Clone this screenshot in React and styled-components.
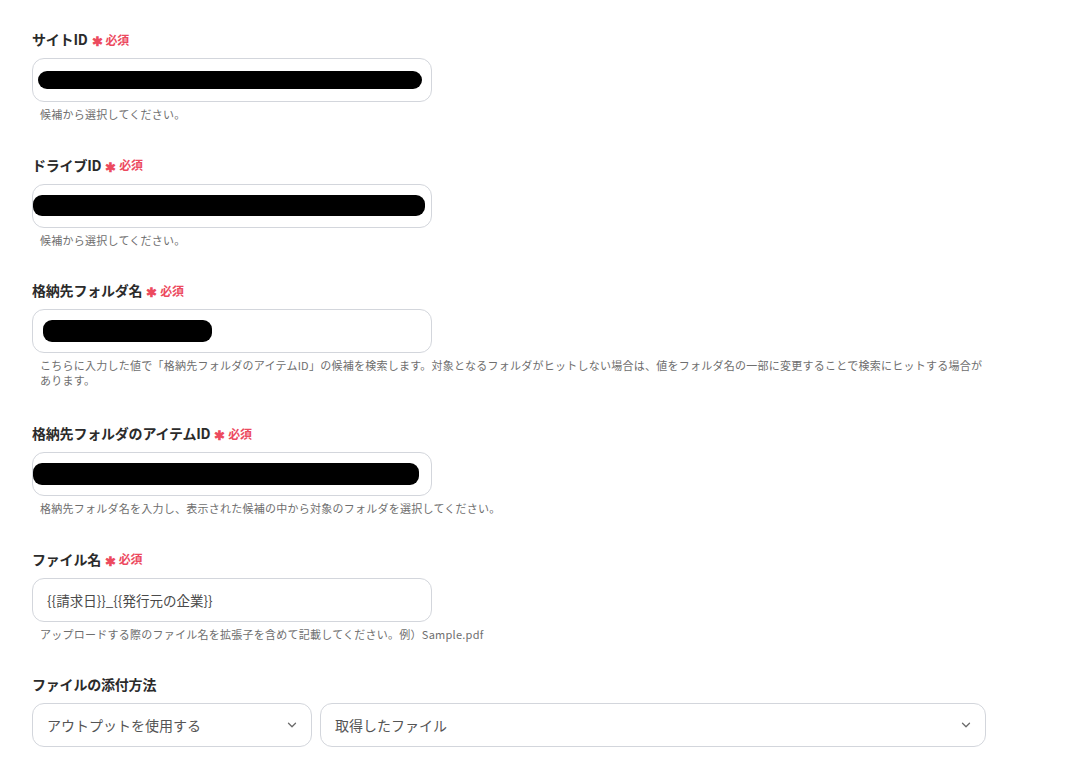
import styled, { createGlobalStyle } from "styled-components";
import { ChevronDown } from "lucide-react";

const GlobalStyle = createGlobalStyle`
  body {
    margin: 0;
    background: #ffffff;
    font-family: "Noto Sans CJK JP", "Noto Sans", sans-serif;
    color: #333333;
  }
`;

const Page = styled("div")`
  width: 954px;
  padding: 29px 0 0 32px;
`;

const Field = styled("div")`
  margin-bottom: ${(props) => (props.last ? "0" : props.tall ? "35px" : "32.5px")};
`;

const Label = styled("div")`
  display: flex;
  align-items: center;
  height: 20px;
  font-size: 14px;
  font-weight: 700;
  color: #2b2b2b;
  letter-spacing: -0.2px;
`;

const Asterisk = styled("span")`
  margin-left: 4px;
  color: #ec4a5e;
  font-size: 13px;
  font-weight: 700;
  line-height: 1;
  padding-top: 3px;
`;

const Required = styled("span")`
  margin-left: 3px;
  color: #ec4a5e;
  font-size: 12px;
  font-weight: 700;
`;

const InputBox = styled("div")`
  margin-top: 9px;
  box-sizing: border-box;
  width: 400px;
  height: 44px;
  border: 1px solid #d3d6dc;
  border-radius: 12px;
  display: flex;
  align-items: center;
  padding: 0 14px;
  font-size: 13.5px;
  color: #4a4a4a;
`;

const Redacted = styled("div")`
  flex-shrink: 0;
  background: #000000;
  border-radius: 9px;
  height: ${(props) => props.h}px;
  width: ${(props) => props.w}px;
  margin-left: ${(props) => props.x}px;
`;

const Help = styled("div")`
  margin-top: 5px;
  padding-left: 8px;
  max-width: 946px;
  font-size: 11px;
  line-height: 15px;
  letter-spacing: 0.25px;
  color: #6e6e6e;
`;

const SelectRow = styled("div")`
  margin-top: 9px;
  display: flex;
  gap: 8px;
`;

const Select = styled("div")`
  box-sizing: border-box;
  width: ${(props) => (props.grow ? "auto" : "280px")};
  flex: ${(props) => (props.grow ? "1" : "none")};
  height: 44px;
  border: 1px solid #d3d6dc;
  border-radius: 12px;
  display: flex;
  align-items: center;
  justify-content: space-between;
  padding: 0 12px 0 14px;
  font-size: 14px;
  color: #555555;
`;

const fields = [
  { label: "サイトID", bar: { x: -9, w: 384, h: 18 }, help: "候補から選択してください。" },
  { label: "ドライブID", bar: { x: -14, w: 392, h: 21 }, help: "候補から選択してください。" },
  {
    label: "格納先フォルダ名",
    bar: { x: -4, w: 169, h: 22 },
    tall: true,
    help:
      "こちらに入力した値で「格納先フォルダのアイテムID」の候補を検索します。対象となるフォルダがヒットしない場合は、値をフォルダ名の一部に変更することで検索にヒットする場合があります。",
  },
  {
    label: "格納先フォルダのアイテムID",
    bar: { x: -14, w: 386, h: 22 },
    help: "格納先フォルダ名を入力し、表示された候補の中から対象のフォルダを選択してください。",
  },
  {
    label: "ファイル名",
    value: "{{請求日}}_{{発行元の企業}}",
    help: "アップロードする際のファイル名を拡張子を含めて記載してください。例）Sample.pdf",
  },
];

export default function App() {
  return (
    <>
      <GlobalStyle />
      <Page>
        {fields.map((f, i) => (
          <Field key={i} tall={f.tall}>
            <Label>
              {f.label}
              <Asterisk>✱</Asterisk>
              <Required>必須</Required>
            </Label>
            <InputBox>
              {f.bar ? <Redacted x={f.bar.x} w={f.bar.w} h={f.bar.h} /> : f.value}
            </InputBox>
            <Help>{f.help}</Help>
          </Field>
        ))}
        <Field last>
          <Label>ファイルの添付方法</Label>
          <SelectRow>
            <Select>
              アウトプットを使用する
              <ChevronDown size={14} strokeWidth={2.2} color="#6b6b6b" />
            </Select>
            <Select grow>
              取得したファイル
              <ChevronDown size={14} strokeWidth={2.2} color="#6b6b6b" />
            </Select>
          </SelectRow>
        </Field>
      </Page>
    </>
  );
}
